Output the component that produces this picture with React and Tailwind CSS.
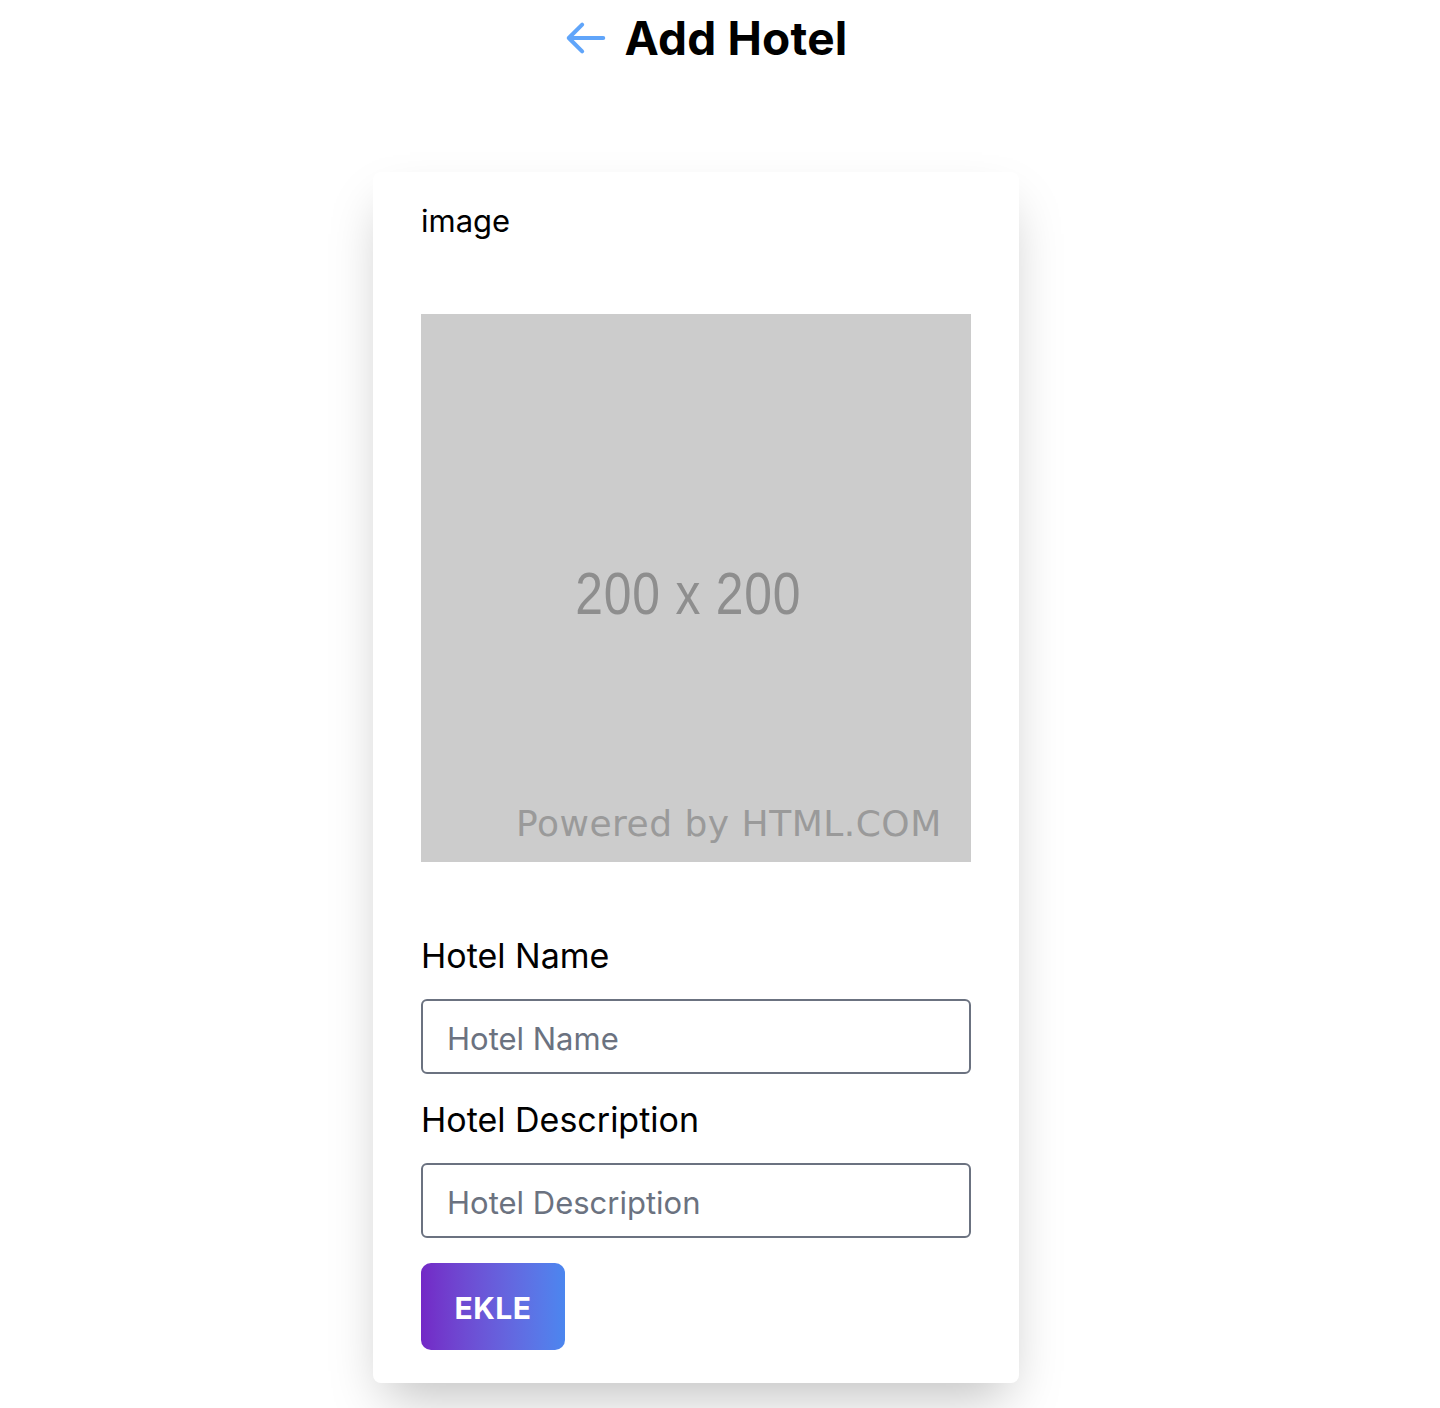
import React from 'react'

// Add Hotel form — header, image preview, two fields and a submit button

function BackArrow() {
  return (
    <svg
      viewBox="0 0 24 24"
      className="w-[46px] h-[46px] text-[#60a5fa] shrink-0"
      fill="none"
      stroke="currentColor"
      strokeWidth={2.1}
      strokeLinecap="round"
      strokeLinejoin="round"
    >
      <path d="M10 19l-7-7m0 0l7-7m-7 7h18" />
    </svg>
  )
}

function Placeholder() {
  return (
    <div className="relative w-[550px] h-[548px] bg-[#cccccc] overflow-hidden">
      <div className="absolute inset-x-0 top-[250px] flex justify-center pr-[15px]">
        <span className="text-[60px] leading-none text-[#8e8e8e] scale-x-[0.83] tracking-[1px] [font-family:'Liberation_Sans',Arial,sans-serif]">
          200 x 200
        </span>
      </div>
      <span className="absolute left-[95px] top-[492px] text-[36px] leading-none text-[#9a9a9a] tracking-[0.5px] [font-family:'DejaVu_Sans',sans-serif]">
        Powered by HTML.COM
      </span>
    </div>
  )
}

function Field({ label }) {
  return (
    <div className="flex flex-col">
      <label className="text-[34px] leading-[48px] text-black mb-[19px]">{label}</label>
      <input
        type="text"
        placeholder={label}
        className="h-[75px] w-[550px] rounded-[6px] border-2 border-[#6b7280] px-[24px] pt-[3px] text-[31px] text-black placeholder:text-[#6b7280] outline-none"
      />
    </div>
  )
}

export default function App() {
  return (
    <div className="min-h-screen bg-white text-black [font-family:Inter,'Liberation_Sans',sans-serif]">
      {/* ── Header ── */}
      <div className="flex items-center justify-center gap-[16px] pt-[15px] pr-[30px]">
        <BackArrow />
        <h1 className="text-[46px] leading-none font-bold tracking-[0.2px]">Add Hotel</h1>
      </div>

      {/* ── Card ── */}
      <div className="flex justify-center pr-[48px] mt-[111px]">
        <div className="w-[646px] bg-white rounded-[8px] shadow-2xl px-[48px] pt-[25px] pb-[33px]">
          <p className="text-[31px] leading-[48px] mb-[69px]">image</p>
          <Placeholder />
          <div className="mt-[70px] flex flex-col gap-[22px]">
            <Field label="Hotel Name" />
            <Field label="Hotel Description" />
          </div>
          <button className="mt-[25px] w-[144px] h-[87px] rounded-[10px] bg-gradient-to-r from-[#7328c6] to-[#4b86ef] text-white font-bold text-[30px] tracking-[0.5px] pt-[3px]">
            EKLE
          </button>
        </div>
      </div>
    </div>
  )
}
